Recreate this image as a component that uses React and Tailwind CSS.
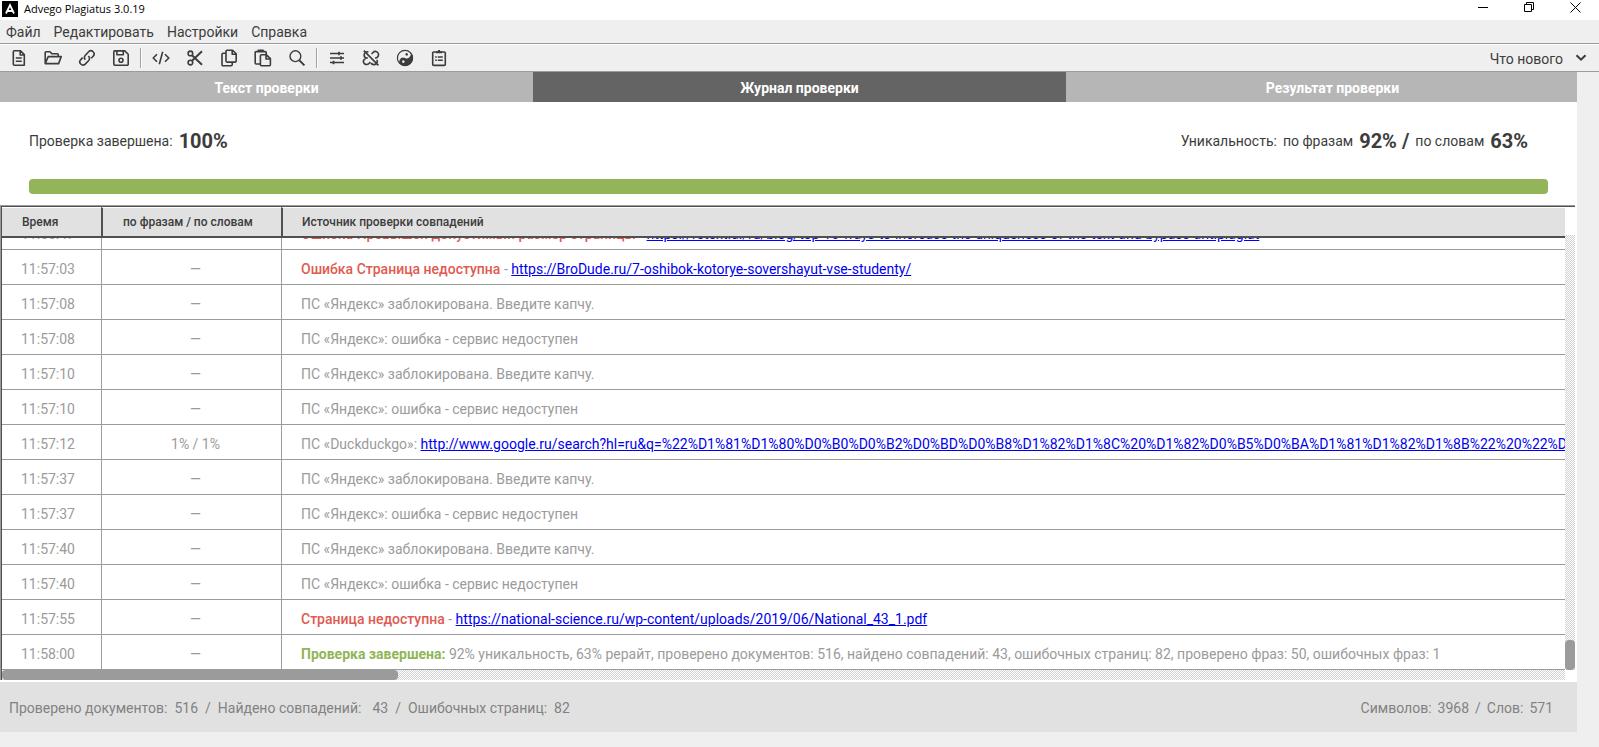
import React from "react";
import clsx from "clsx";

const menu = ["Файл", "Редактировать", "Настройки", "Справка"];

const tabs = [
  { label: "Текст проверки" },
  { label: "Журнал проверки", active: true },
  { label: "Результат проверки" },
];

const blocked = "ПС «Яндекс» заблокирована. Введите капчу.";
const failed = "ПС «Яндекс»: ошибка - сервис недоступен";

const rows = [
  {
    time: "11:56:47",
    rate: "",
    error: "Ошибка Превышен допустимый размер страницы",
    url: "https://retext.ai/ru/blog/top-10-ways-to-increase-the-uniqueness-of-the-text-and-bypass-antiplagiat",
    clipped: true,
  },
  {
    time: "11:57:03",
    error: "Ошибка Страница недоступна",
    url: "https://BroDude.ru/7-oshibok-kotorye-sovershayut-vse-studenty/",
  },
  { time: "11:57:08", text: blocked },
  { time: "11:57:08", text: failed },
  { time: "11:57:10", text: blocked },
  { time: "11:57:10", text: failed },
  {
    time: "11:57:12",
    rate: "1% / 1%",
    text: "ПС «Duckduckgo»: ",
    url: "http://www.google.ru/search?hl=ru&q=%22%D1%81%D1%80%D0%B0%D0%B2%D0%BD%D0%B8%D1%82%D1%8C%20%D1%82%D0%B5%D0%BA%D1%81%D1%82%D1%8B%22%20%22%D0%BE%D0%BD%D0%BB",
  },
  { time: "11:57:37", text: blocked },
  { time: "11:57:37", text: failed },
  { time: "11:57:40", text: blocked },
  { time: "11:57:40", text: failed },
  {
    time: "11:57:55",
    error: "Страница недоступна",
    url: "https://national-science.ru/wp-content/uploads/2019/06/National_43_1.pdf",
  },
  {
    time: "11:58:00",
    done: "Проверка завершена:",
    text: " 92% уникальность, 63% рерайт, проверено документов: 516, найдено совпадений: 43, ошибочных страниц: 82, проверено фраз: 50, ошибочных фраз: 1",
  },
];

const Icon = ({ children }) => (
  <svg
    width="18"
    height="18"
    viewBox="0 0 18 18"
    fill="none"
    stroke="currentColor"
    strokeWidth="1.6"
    strokeLinejoin="round"
    aria-hidden="true"
  >
    {children}
  </svg>
);

const fileTools = [
  {
    name: "Новый",
    icon: (
      <Icon>
        <path d="M4.3 1.8h6.2l3.8 3.8v10.6H4.3a1 1 0 0 1-1-1V2.8a1 1 0 0 1 1-1zM10.2 2v4h4M5.8 9h6M5.8 12.2h6" />
      </Icon>
    ),
  },
  {
    name: "Открыть",
    icon: (
      <Icon>
        <path d="M1.2 14.6V3.6a.8.8 0 0 1 .8-.8h4l1.8 2h5.6a.8.8 0 0 1 .8.8v2M1.2 14.6l3-7h13l-2.6 7z" />
      </Icon>
    ),
  },
  {
    name: "Ссылка",
    icon: (
      <Icon>
        <path d="M7.4 10.8a3.4 3.4 0 0 1 0-4.6l3.2-3.4a3.1 3.1 0 0 1 4.5 4.5l-1.9 2M10.4 7a3.4 3.4 0 0 1 .1 4.7l-3.3 3.4a3.1 3.1 0 0 1-4.4-4.5l1.9-2" />
      </Icon>
    ),
  },
  {
    name: "Сохранить",
    icon: (
      <Icon>
        <path d="M2.6 1.9h10.2l3.4 3.3v10a1 1 0 0 1-1 1H2.8a1 1 0 0 1-1-1V2.7a.8.8 0 0 1 .8-.8zM4.9 2.2v3.6h6.4V2.2" />
        <circle cx="9" cy="11.2" r="2" />
      </Icon>
    ),
  },
];

const editTools = [
  {
    name: "HTML",
    icon: (
      <Icon>
        <path d="M5 5.2 1.2 9 5 12.8M13 5.2 16.8 9 13 12.8M10.7 2.8 7.3 15.2" />
      </Icon>
    ),
  },
  {
    name: "Вырезать",
    icon: (
      <Icon>
        <circle cx="4.4" cy="4.4" r="2.3" />
        <circle cx="4.4" cy="13.6" r="2.3" />
        <path d="M6 6.2l10 9.6M6 11.8l10-9.6" strokeWidth="1.9" />
      </Icon>
    ),
  },
  {
    name: "Копировать",
    icon: (
      <Icon>
        <path d="M7 1.3h5.6l3.6 3.5v7.3a1 1 0 0 1-1 1H7a1 1 0 0 1-1-1V2.3a1 1 0 0 1 1-1zM12.2 1.6v3.6h3.8M5.8 4.3H3a1 1 0 0 0-1 1v10.4a1 1 0 0 0 1 1h8.2a1 1 0 0 0 1-1v-2.4" />
      </Icon>
    ),
  },
  {
    name: "Вставить",
    icon: (
      <Icon>
        <path d="M6.4 15H2.2a1 1 0 0 1-1-1V3.6a1 1 0 0 1 1-1h9a1 1 0 0 1 1 1v1.6M4.3 2.8V1.4h4.8v1.4M7.4 5.8h5l4 3.8v6.1a1 1 0 0 1-1 1h-8a1 1 0 0 1-1-1V6.8a1 1 0 0 1 1-1zM12 6v4h4.2" />
      </Icon>
    ),
  },
  {
    name: "Найти",
    icon: (
      <Icon>
        <circle cx="7.4" cy="7.2" r="5.4" strokeWidth="1.4" />
        <path d="M11.4 11.4l5 5" strokeWidth="2" />
      </Icon>
    ),
  },
];

const checkTools = [
  {
    name: "Параметры",
    icon: (
      <Icon>
        <path d="M2 4.5h14M2 9h14M2 13.5h14" strokeWidth="1.7" />
        <path d="M11 2.8v3.4M13 7.3v3.4M5.5 11.8v3.4" strokeWidth="1.7" />
      </Icon>
    ),
  },
  {
    name: "Убрать ссылки",
    icon: (
      <Icon>
        <path d="M6.4 3a3.2 3.2 0 0 0-4.3 3c0 1.800 1.200 3 3 3h.8M9.600 5l1.600-1.700a3.100 3.100 0 0 1 5 1c.6 1.400.2 3-1 4-.6.500-1.400.700-2.200.700M8.400 13l-1.600 1.700a3.100 3.100 0 0 1-4.400-.1 3.100 3.100 0 0 1 0-4.300l1.400-1.300M14.800 10.800a3.200 3.200 0 0 1-3.200 4.800c-1.200-.1-2-.6-2.600-1.600M1.800 1.600l14.600 14.800" />
      </Icon>
    ),
  },
  {
    name: "Уникальность",
    icon: (
      <Icon>
        <circle cx="9" cy="9" r="7.6" strokeWidth="1.2" />
        <g transform="rotate(25 9 9)" stroke="none">
          <path d="M9 1a8 8 0 0 1 0 16 4 4 0 0 1 0-8 4 4 0 0 0 0-8z" fill="currentColor" />
          <circle cx="9" cy="5" r="1.3" fill="currentColor" />
          <circle cx="9" cy="13" r="1.3" fill="#efefef" />
        </g>
      </Icon>
    ),
  },
  {
    name: "Журнал",
    icon: (
      <Icon>
        <path d="M3.7 3h10.6a1 1 0 0 1 1 1v11.4a1 1 0 0 1-1 1H3.7a1 1 0 0 1-1-1V4a1 1 0 0 1 1-1z" />
        <path d="M6 3.2h6M9 1v2" strokeWidth="2" />
        <path d="M5.2 8h1.6M7.8 8h5M5.2 11.2h1.6M7.8 11.2h5" strokeWidth="1.5" />
      </Icon>
    ),
  },
];

const ToolGroup = ({ tools }) => (
  <div className="flex gap-4">
    {tools.map((tool) => (
      <button key={tool.name} type="button" aria-label={tool.name}>
        {tool.icon}
      </button>
    ))}
  </div>
);

const Separator = () => (
  <div className="mx-2.5 h-5 w-0.5 border-l border-[#a0a0a0] bg-white" />
);

const TitleBar = () => (
  <header className="flex h-5 items-start justify-between bg-white text-black">
    <div className="flex items-center gap-1.5 pl-0.5">
      <svg width="16" height="16" viewBox="0 0 16 16" aria-hidden="true">
        <rect width="16" height="16" fill="#000" />
        <path d="M4 12.5 8 4l4 8.5M5.5 10h5" fill="none" stroke="#fff" strokeWidth="1.8" />
      </svg>
      <h1 className="font-['Open_Sans',sans-serif] text-[11px] leading-[18px]">
        Advego Plagiatus 3.0.19
      </h1>
    </div>
    <div className="flex gap-[35px] pt-0.5 pr-[18px]">
      <button type="button" aria-label="Свернуть">
        <svg width="11" height="11" viewBox="0 0 11 11" stroke="#000">
          <path d="M0 5.5h10" />
        </svg>
      </button>
      <button type="button" aria-label="Развернуть">
        <svg width="11" height="11" viewBox="0 0 11 11" fill="none" stroke="#000">
          <path d="M.5 2.5h7v7h-7zM2.5 2.5v-2h7v7h-2" />
        </svg>
      </button>
      <button type="button" aria-label="Закрыть">
        <svg width="11" height="11" viewBox="0 0 11 11" stroke="#000">
          <path d="M.5.5l10 10M10.5.5l-10 10" />
        </svg>
      </button>
    </div>
  </header>
);

const Toolbar = () => (
  <div className="flex h-7 items-center justify-between border-b border-[#9b9b9b] border-t border-t-white pr-3 pl-2.5 text-[#3c3c3c]">
    <div className="flex items-center">
      <ToolGroup tools={fileTools} />
      <Separator />
      <ToolGroup tools={editTools} />
      <Separator />
      <ToolGroup tools={checkTools} />
    </div>
    <button type="button" className="flex items-center gap-3">
      <span className="pt-0.5">Что нового</span>
      <svg width="12" height="8" viewBox="0 0 12 8" fill="none" stroke="currentColor" strokeWidth="2">
        <path d="M1.5 1.2 6 5.7l4.5-4.5" />
      </svg>
    </button>
  </div>
);

const Summary = () => (
  <section className="flex flex-col bg-white px-[29px] pb-[11px] text-[14px] text-[#3c3c3c]">
    <div className="flex h-[77px] items-center justify-between pt-px pr-5">
      <p className="flex items-center gap-1.5">
        Проверка завершена:
        <b className="text-[20px]">100%</b>
      </p>
      <p className="flex items-center gap-1.5">
        <span>Уникальность:</span>
        <span>по фразам</span>
        <b className="text-[20px]">92% /</b>
        <span>по словам</span>
        <b className="text-[20px]">63%</b>
      </p>
    </div>
    <div
      role="progressbar"
      aria-label="Проверка завершена"
      aria-valuenow={100}
      className="h-[15px] rounded bg-[#91b558]"
    />
  </section>
);

const Cell = ({ clipped, className, children }) => (
  <td className="border-b border-l border-[#9b9b9b] p-0 first:border-l-0">
    <div
      className={clsx(
        "flex overflow-hidden whitespace-pre",
        clipped ? "h-[11px] items-end" : "h-[34px] items-center",
        className
      )}
    >
      <div className="h-[34px] shrink-0 pt-1 leading-[30px]">{children}</div>
    </div>
  </td>
);

const LogTable = () => (
  <table className="w-full table-fixed border-separate border-spacing-0 text-[14px] text-[#9b9b9b]">
    <thead>
      <tr className="h-[31px] bg-[#e1e1e1] text-left text-[12px] text-[#3c3c3c]">
        <th className="w-[99px] border-t border-b-2 border-t-white border-b-[#505050] pl-5 font-medium">
          Время
        </th>
        <th className="w-[180px] border-t border-b-2 border-l-2 border-t-white border-b-[#505050] border-l-[#505050] pl-5 font-medium">
          по фразам / по словам
        </th>
        <th className="border-t border-b-2 border-l-2 border-t-white border-b-[#505050] border-l-[#505050] pl-[19px] font-medium">
          Источник проверки совпадений
        </th>
      </tr>
    </thead>
    <tbody>
      {rows.map((row, index) => (
        <tr key={index}>
          <Cell clipped={row.clipped} className="pl-[19px]">
            {row.time}
          </Cell>
          <Cell clipped={row.clipped} className="justify-center pl-2">
            {row.rate ?? "—"}
          </Cell>
          <Cell clipped={row.clipped} className="pl-[19px]">
            {row.error && (
              <>
                <span className="font-medium text-[#e05a50]">{row.error}</span>
                {" - "}
              </>
            )}
            {row.done && <b className="text-[#91b558]">{row.done}</b>}
            {row.text}
            {row.url && (
              <a href={row.url} className="text-[#0000f0] underline">
                {row.url}
              </a>
            )}
          </Cell>
        </tr>
      ))}
    </tbody>
  </table>
);

const Log = () => (
  <section className="bg-white pr-0.5 pb-0.5">
    <div className="border-t border-l border-[#9b9b9b]">
      <div className="border-t border-l border-[#505050]">
        <div className="flex">
          <div className="min-w-0 flex-1">
            <LogTable />
          </div>
          <div className="flex w-2.5 flex-col pt-7">
            <div className="flex flex-1 flex-col justify-end bg-[repeating-conic-gradient(#d2d2d2_0_25%,#fff_0_50%)] bg-[length:2px_2px]">
              <div className="h-[30px] rounded bg-[#9b9b9b]" />
            </div>
          </div>
        </div>
        <div className="mr-2.5 h-2.5 bg-[repeating-conic-gradient(#d2d2d2_0_25%,#fff_0_50%)] bg-[length:2px_2px]">
          <div className="h-2.5 w-[396px] rounded bg-[#9b9b9b]" />
        </div>
      </div>
    </div>
  </section>
);

const StatusBar = () => (
  <footer className="flex h-[50px] items-center justify-between bg-[#e1e1e1] pt-0.5 pr-6 pl-[9px] text-[14px] text-[#828282]">
    <p className="flex gap-[7px]">
      <span>Проверено документов:</span>
      <span>516</span>
      <span>/</span>
      <span>Найдено совпадений:</span>
      <span className="pl-1">43</span>
      <span>/</span>
      <span>Ошибочных страниц:</span>
      <span>82</span>
    </p>
    <p className="flex gap-1.5">
      <span>Символов:</span>
      <span>3968</span>
      <span>/</span>
      <span>Слов:</span>
      <span>571</span>
    </p>
  </footer>
);

export default function App() {
  return (
    <div className="min-h-screen bg-[#efefef] font-[Roboto,sans-serif] text-[14px] text-[#3c3c3c]">
      <TitleBar />
      <nav className="flex h-6 items-center gap-[13px] border-b border-[#9b9b9b] pt-0.5 pl-1.5">
        {menu.map((item) => (
          <button key={item} type="button">
            {item}
          </button>
        ))}
      </nav>
      <Toolbar />
      <main className="mr-[22px]">
        {/* the tabs share the full window width, the last one runs under the right gutter */}
        <div className="overflow-hidden">
          <div role="tablist" className="-mr-[22px] flex font-bold text-white">
            {tabs.map((tab) => (
              <button
                key={tab.label}
                type="button"
                role="tab"
                aria-selected={!!tab.active}
                className={clsx(
                  "h-[30px] flex-1 pt-0.5",
                  tab.active ? "bg-[#646464]" : "bg-[#b6b6b6]"
                )}
              >
                {tab.label}
              </button>
            ))}
          </div>
        </div>
        <Summary />
        <Log />
        <StatusBar />
      </main>
    </div>
  );
}
